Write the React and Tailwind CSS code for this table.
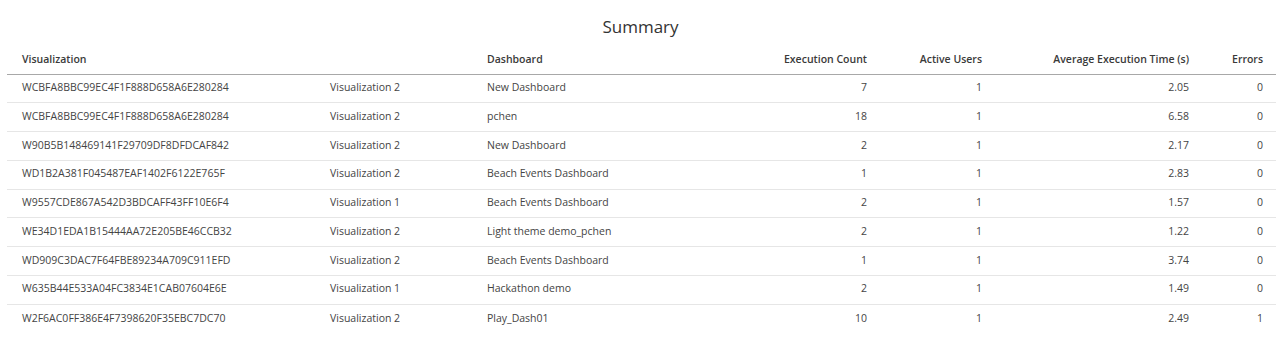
import React from "react";

const rows = [
  ["WCBFA8BBC99EC4F1F888D658A6E280284", "Visualization 2", "New Dashboard", "7", "1", "2.05", "0"],
  ["WCBFA8BBC99EC4F1F888D658A6E280284", "Visualization 2", "pchen", "18", "1", "6.58", "0"],
  ["W90B5B148469141F29709DF8DFDCAF842", "Visualization 2", "New Dashboard", "2", "1", "2.17", "0"],
  ["WD1B2A381F045487EAF1402F6122E765F", "Visualization 2", "Beach Events Dashboard", "1", "1", "2.83", "0"],
  ["W9557CDE867A542D3BDCAFF43FF10E6F4", "Visualization 1", "Beach Events Dashboard", "2", "1", "1.57", "0"],
  ["WE34D1EDA1B15444AA72E205BE46CCB32", "Visualization 2", "Light theme demo_pchen", "2", "1", "1.22", "0"],
  ["WD909C3DAC7F64FBE89234A709C911EFD", "Visualization 2", "Beach Events Dashboard", "1", "1", "3.74", "0"],
  ["W635B44E533A04FC3834E1CAB07604E6E", "Visualization 1", "Hackathon demo", "2", "1", "1.49", "0"],
  ["W2F6AC0FF386E4F7398620F35EBC7DC70", "Visualization 2", "Play_Dash01", "10", "1", "2.49", "1"],
];

const cols = "grid grid-cols-[308px_157px_200px_180px_115px_207px_74px] items-center";

export default function App() {
  return (
    <div className="w-[1281px] h-[341px] bg-white text-[#333] font-['Open_Sans',sans-serif] overflow-hidden">
      <div className="h-[46px] flex items-center justify-center pt-[7px]">
        <h2 className="text-[17px] leading-none text-[#333]">Summary</h2>
      </div>
      <div className="ml-[7px] w-[1269px]">
        <div className={`${cols} h-[28.5px] border-b border-[#a8a8a8] pl-[15px] pr-[13px] text-[10.5px] font-semibold text-[#3a3a3a]`}>
          <div>Visualization</div>
          <div></div>
          <div>Dashboard</div>
          <div className="text-right">Execution Count</div>
          <div className="text-right">Active Users</div>
          <div className="text-right">Average Execution Time (s)</div>
          <div className="text-right">Errors</div>
        </div>
        {rows.map((r, i) => (
          <div
            key={i}
            className={`${cols} h-[28.75px] pl-[15px] pr-[13px] pb-[1px] text-[10.5px] text-[#444] ${i < rows.length - 1 ? "border-b border-[#e6e6e6]" : ""}`}
          >
            <div className="text-[#444]">{r[0]}</div>
            <div className="text-[#444]">{r[1]}</div>
            <div className="text-[#444]">{r[2]}</div>
            <div className="text-right text-[#444]">{r[3]}</div>
            <div className="text-right text-[#444]">{r[4]}</div>
            <div className="text-right text-[#444]">{r[5]}</div>
            <div className="text-right text-[#444]">{r[6]}</div>
          </div>
        ))}
      </div>
    </div>
  );
}
